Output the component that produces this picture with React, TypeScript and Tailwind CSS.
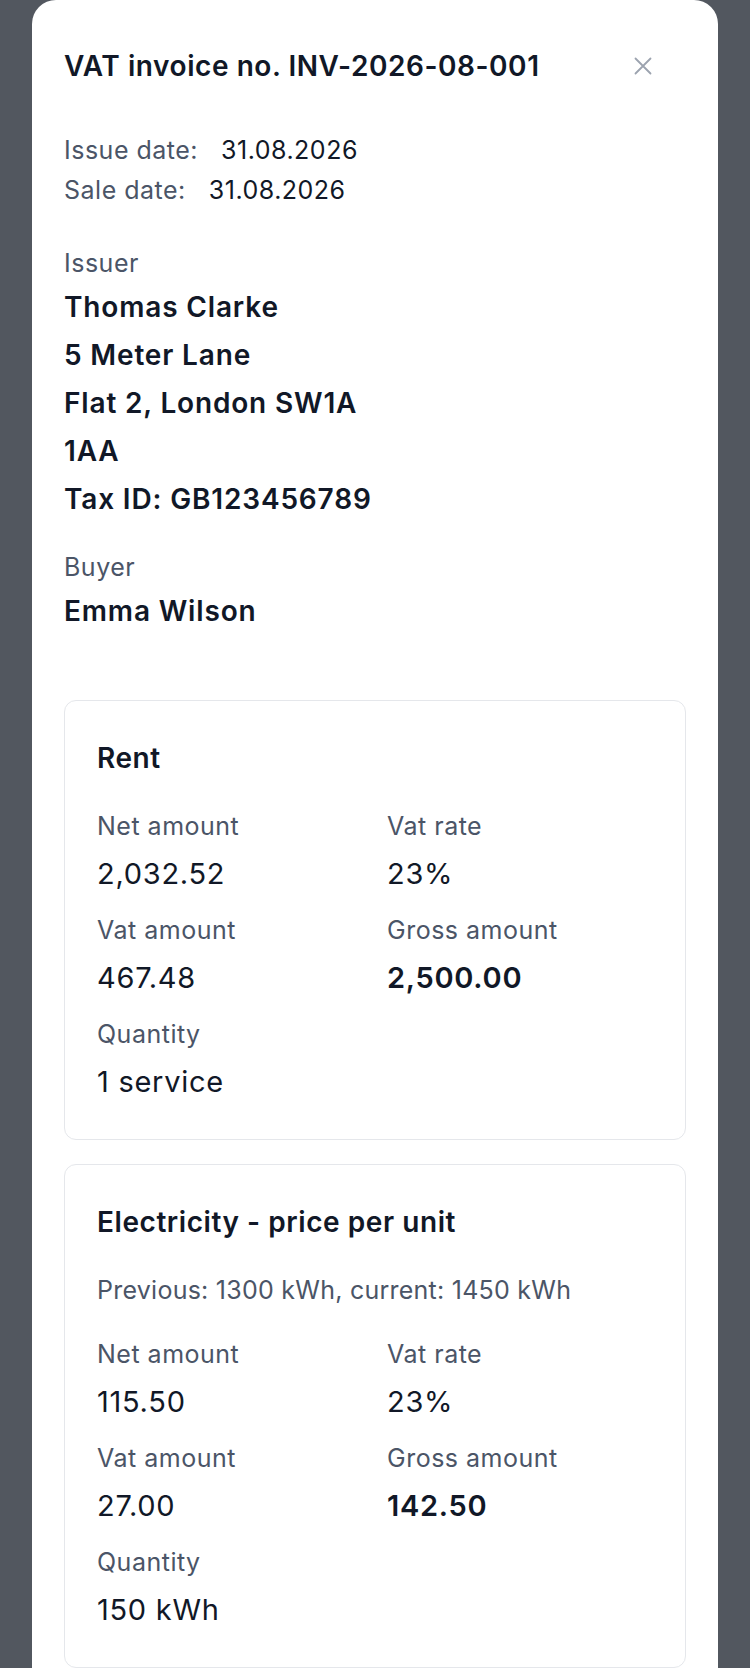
import React from "react";

const font = { fontFamily: '"Inter", "Liberation Sans", sans-serif' };

function Cell({ label, value, bold }: { label: string; value: string; bold?: boolean }) {
  return (
    <div className="flex flex-col">
      <div className="text-[25px] leading-[40px] tracking-[0.02em] text-[#4b5567]">{label}</div>
      <div
        className={
          "mt-1 text-[29px] leading-[48px] tracking-[0.025em] text-[#111827] " +
          (bold ? "font-semibold tracking-[0.01em]" : "font-normal")
        }
      >
        {value}
      </div>
    </div>
  );
}

function ItemCard({
  title,
  description,
  net,
  rate,
  vat,
  gross,
  qty,
}: {
  title: string;
  description?: string;
  net: string;
  rate: string;
  vat: string;
  gross: string;
  qty: string;
}) {
  return (
    <div className="rounded-xl border border-[#e5e7eb] px-8 pt-[33px] pb-[33px]">
      <div className="text-[28px] leading-[48px] tracking-[0.02em] font-semibold text-[#111827]">
        {title}
      </div>
      {description && (
        <div className="mt-6 text-[25px] leading-[40px] tracking-[0.01em] text-[#4b5567]">
          {description}
        </div>
      )}
      <div className="mt-6 grid grid-cols-2 gap-x-6 gap-y-3">
        <Cell label="Net amount" value={net} />
        <Cell label="Vat rate" value={rate} />
        <Cell label="Vat amount" value={vat} />
        <Cell label="Gross amount" value={gross} bold />
        <Cell label="Quantity" value={qty} />
      </div>
    </div>
  );
}

export default function App() {
  return (
    <div className="min-h-screen w-full bg-[#52575f] overflow-hidden" style={font}>
      <div className="mx-8 rounded-t-3xl bg-white px-8 pt-12 pb-16">
        <div className="flex items-center justify-between">
          <h1 className="text-[28px] leading-[36px] tracking-[0.02em] font-semibold text-[#111827]">
            VAT invoice no. INV-2026-08-001
          </h1>
          <button className="mr-[34px] flex h-[18px] w-[18px] items-center justify-center text-[#9ca3af]">
            <svg width="18" height="18" viewBox="0 0 18 18" fill="none">
              <path d="M1.5 1.5L16.5 16.5M16.5 1.5L1.5 16.5" stroke="currentColor" strokeWidth="1.8" strokeLinecap="round" />
            </svg>
          </button>
        </div>

        <div className="mt-[46px] text-[25px] leading-[40px] tracking-[0.02em]">
          <div>
            <span className="text-[#4b5567]">Issue date:</span>
            <span className="ml-[23px] text-[#111827]">31.08.2026</span>
          </div>
          <div>
            <span className="text-[#4b5567]">Sale date:</span>
            <span className="ml-[23px] text-[#111827]">31.08.2026</span>
          </div>
        </div>

        <div className="mt-[33px]">
          <div className="text-[25px] leading-[40px] tracking-[0.02em] text-[#4b5567]">Issuer</div>
          <div className="w-[320px] text-[28px] leading-[48px] tracking-[0.03em] font-semibold text-[#111827]">
            <div>Thomas Clarke</div>
            <div>5 Meter Lane</div>
            <div>Flat 2, London SW1A</div>
            <div>1AA</div>
            <div>Tax ID: GB123456789</div>
          </div>
        </div>

        <div className="mt-6">
          <div className="text-[25px] leading-[40px] tracking-[0.02em] text-[#4b5567]">Buyer</div>
          <div className="text-[28px] leading-[48px] tracking-[0.03em] font-semibold text-[#111827]">
            Emma Wilson
          </div>
        </div>

        <div className="mt-[65px] flex flex-col gap-6">
          <ItemCard
            title="Rent"
            net="2,032.52"
            rate="23%"
            vat="467.48"
            gross="2,500.00"
            qty="1 service"
          />
          <ItemCard
            title="Electricity - price per unit"
            description="Previous: 1300 kWh, current: 1450 kWh"
            net="115.50"
            rate="23%"
            vat="27.00"
            gross="142.50"
            qty="150 kWh"
          />
        </div>
      </div>
    </div>
  );
}
